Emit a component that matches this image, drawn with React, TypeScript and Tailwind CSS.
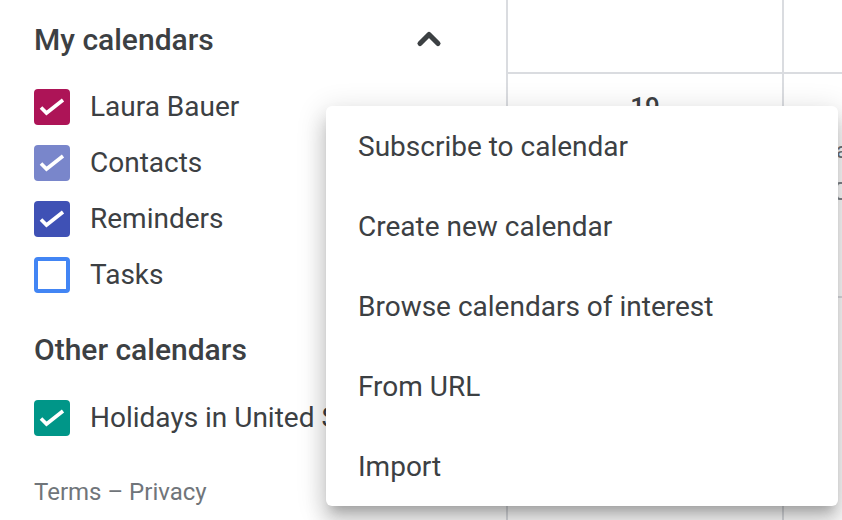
import { ChevronUp } from "lucide-react";

const calendars = [
  { name: "Laura Bauer", color: "bg-[#ad1457]", checked: true },
  { name: "Contacts", color: "bg-[#7986cb]", checked: true },
  { name: "Reminders", color: "bg-[#3f51b5]", checked: true },
  { name: "Tasks", color: "", checked: false },
];

const menuItems = [
  "Subscribe to calendar",
  "Create new calendar",
  "Browse calendars of interest",
  "From URL",
  "Import",
];

function Check({ color, checked }: { color: string; checked: boolean }) {
  if (!checked) {
    return <div className="h-[36px] w-[36px] shrink-0 rounded-[4px] border-[4px] border-[#4285f4] bg-white" />;
  }
  return (
    <div className={`h-[36px] w-[36px] shrink-0 rounded-[4px] ${color}`}>
      <svg viewBox="0 0 36 36" className="h-full w-full">
        <polyline points="7,18.5 12.5,24 29,11" fill="none" stroke="white" strokeWidth="3.6" />
      </svg>
    </div>
  );
}

function CalendarRow({ name, color, checked }: { name: string; color: string; checked: boolean }) {
  return (
    <div className="flex h-[56px] items-center gap-[20px] whitespace-nowrap pt-[1px]">
      <Check color={color} checked={checked} />
      <span className="text-[28px] text-[#3c4043]">{name}</span>
    </div>
  );
}

export default function App() {
  return (
    <div className="relative flex h-[520px] w-[842px] overflow-hidden bg-white font-['Roboto',sans-serif]">
      {/* sidebar */}
      <aside className="w-[506px] shrink-0 pl-[34px]">
        <div className="flex h-[78px] items-center justify-between pr-[59px]">
          <h2 className="text-[30px] font-medium text-[#3c4043]">My calendars</h2>
          <ChevronUp className="h-[36px] w-[36px] text-[#3c4043]" strokeWidth={3.4} />
        </div>
        {calendars.map((c) => (
          <CalendarRow key={c.name} {...c} />
        ))}
        <div className="mt-[19px] flex h-[56px] items-center">
          <h2 className="text-[30px] font-medium text-[#3c4043]">Other calendars</h2>
        </div>
        <div className="mt-[12px]">
          <CalendarRow name="Holidays in United States" color="bg-[#009688]" checked />
        </div>
        <div className="mt-[29px] text-[24px] text-[#70757a]">Terms – Privacy</div>
      </aside>

      {/* week grid */}
      <div className="grid flex-1 grid-cols-[276px_1fr] grid-rows-[74px_224px_1fr] border-l-2 border-[#dadce0]">
        <div className="border-b-2 border-r-2 border-[#dadce0]" />
        <div className="border-b-2 border-[#dadce0]" />
        <div className="flex justify-center border-b-2 border-r-2 border-[#dadce0] pt-[20px]">
          <span className="text-[26px] font-medium leading-none text-[#3c4043]">19</span>
        </div>
        <div className="border-b-2 border-[#dadce0] pl-[52px] pt-[66px]">
          <div className="text-[22px] leading-none text-[#70757a]">am</div>
          <div className="mt-[20px] h-[18px] w-[20px] rounded-[4px] border-2 border-[#80868b]" />
        </div>
        <div className="border-r-2 border-[#dadce0]" />
        <div />
      </div>

      {/* add calendar menu */}
      <div className="absolute left-[326px] top-[106px] w-[512px] rounded-[6px] bg-white shadow-[0_16px_20px_2px_rgba(0,0,0,0.14),0_6px_28px_4px_rgba(0,0,0,0.12),0_10px_10px_-6px_rgba(0,0,0,0.2)]">
        {menuItems.map((item) => (
          <div key={item} className="flex h-[80px] items-center px-[32px] pt-[1px] text-[28px] text-[#3c4043]">
            {item}
          </div>
        ))}
      </div>
    </div>
  );
}
